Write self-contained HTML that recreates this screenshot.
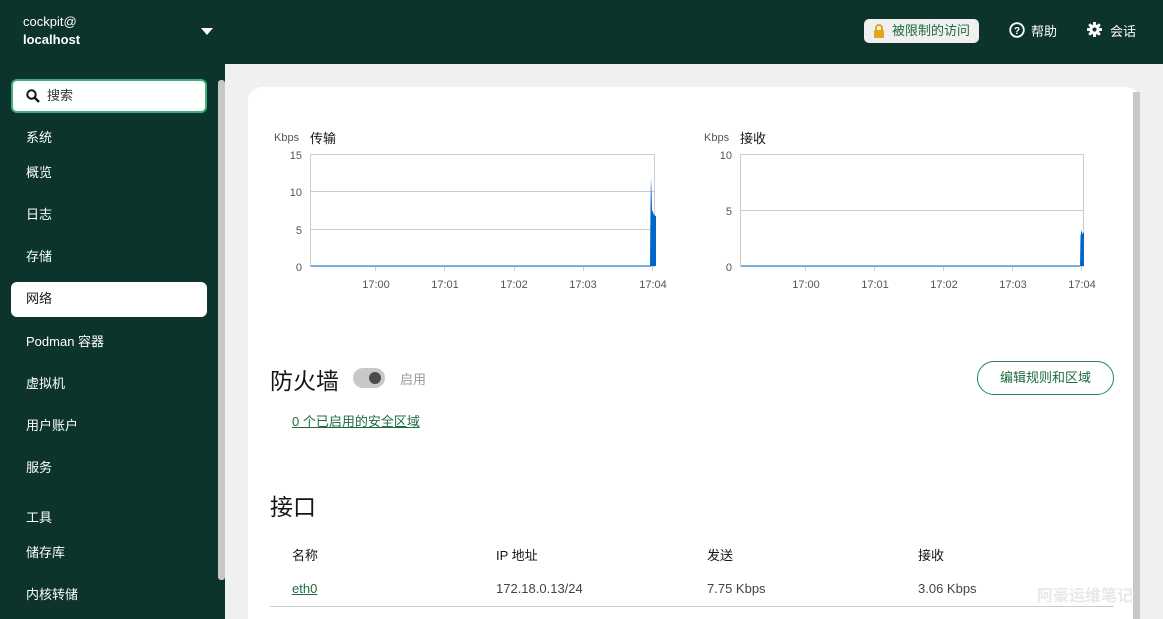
<!DOCTYPE html>
<html><head><meta charset="utf-8"><style>
*{margin:0;padding:0;box-sizing:border-box}
html{width:1163px;height:619px;overflow:hidden}
body{width:1163px;height:619px;overflow:hidden;background:#f0f0f0;font-family:"Liberation Sans","Noto Sans CJK SC",sans-serif;position:relative;font-size:14px;color:#151515}
.top{position:absolute;left:0;top:0;width:1163px;height:64px;background:#0c332c}
.side{position:absolute;left:0;top:64px;width:225px;height:555px;background:#0c332c}
.host{position:absolute;left:23px;top:13px;color:#fff;font-size:13px;line-height:18px}
.caret{position:absolute;left:201px;top:28px;width:0;height:0;border-left:6px solid transparent;border-right:6px solid transparent;border-top:7px solid #fff}
.badge{position:absolute;left:864px;top:19px;width:115px;height:24px;background:#f0f0f0;border-radius:5px;color:#1e6b3e;font-size:13px;line-height:24px;padding-left:28px}
.tl{position:absolute;color:#fff;font-size:13px;top:21px}
.search{position:absolute;left:11px;top:79px;width:196px;height:34px;background:#fff;border:2px solid #3fb17b;border-radius:6px;font-size:13px;line-height:30px;padding-left:34px;color:#333}
.nav{position:absolute;left:26px;color:#fff;font-size:13px}
.sel{position:absolute;left:11px;top:282px;width:196px;height:35px;background:#fff;border-radius:6px}
.sb{position:absolute;left:218px;top:80px;width:7px;height:500px;background:#c8c8c8;border-radius:3px}
.card{position:absolute;left:248px;top:87px;width:892px;height:532px;background:#fff;border-radius:14px 14px 0 0}
.sb2{position:absolute;left:1133px;top:92px;width:7px;height:527px;background:#c8c8c8}
.t{position:absolute;white-space:nowrap}
</style></head><body>
<div class="top"></div><div class="side"></div>
<div class="host">cockpit@<br><b>localhost</b></div>
<div class="caret"></div>
<div class="badge"><svg style="position:absolute;left:9px;top:5px" width="12" height="14" viewBox="0 0 12 14"><path d="M3 6V4a3 3 0 0 1 6 0v2" stroke="#e2a716" stroke-width="2" fill="none"/><rect x="1" y="6" width="10" height="8" rx="1" fill="#e2a716"/></svg>被限制的访问</div>
<svg style="position:absolute;left:1009px;top:22px" width="16" height="16" viewBox="0 0 16 16"><circle cx="8" cy="8" r="6.8" stroke="#fff" stroke-width="1.8" fill="none"/><text x="8" y="12" font-size="10" font-weight="bold" fill="#fff" text-anchor="middle" font-family="Liberation Sans">?</text></svg>
<div class="tl" style="left:1031px">帮助</div>
<svg style="position:absolute;left:1087px;top:22px" width="15" height="15" viewBox="0 0 16 16"><g fill="#fff"><circle cx="8" cy="8" r="5.5"/><rect x="6.5" y="0" width="3" height="16"/><rect x="0" y="6.5" width="16" height="3"/><rect x="6.5" y="0" width="3" height="16" transform="rotate(45 8 8)"/><rect x="6.5" y="0" width="3" height="16" transform="rotate(-45 8 8)"/></g><circle cx="8" cy="8" r="2.2" fill="#0c332c"/></svg>
<div class="tl" style="left:1110px">会话</div>
<div class="search"><svg style="position:absolute;left:13px;top:8px" width="14" height="14" viewBox="0 0 14 14"><circle cx="5.5" cy="5.5" r="4.2" stroke="#151515" stroke-width="2" fill="none"/><path d="M8.5 8.5L13 13" stroke="#151515" stroke-width="2.4"/></svg>搜索</div>
<div class="sel"></div>
<div class="nav" style="top:127px">系统</div>
<div class="nav" style="top:162px">概览</div>
<div class="nav" style="top:204px">日志</div>
<div class="nav" style="top:246px">存储</div>
<div class="nav" style="top:288px;color:#151515">网络</div>
<div class="nav" style="top:331px">Podman 容器</div>
<div class="nav" style="top:373px">虚拟机</div>
<div class="nav" style="top:415px">用户账户</div>
<div class="nav" style="top:457px">服务</div>
<div class="nav" style="top:507px">工具</div>
<div class="nav" style="top:542px">储存库</div>
<div class="nav" style="top:584px">内核转储</div>
<div class="sb"></div>
<div class="card"></div>
<div class="sb2"></div>
<svg style="position:absolute;left:0;top:0" width="1163" height="619">
<g font-family="Liberation Sans" font-size="11" fill="#555">
<text x="274" y="141">Kbps</text><text x="704" y="141">Kbps</text>
<g stroke="#ccc" fill="none"><rect x="310.5" y="154.5" width="344" height="112"/><line x1="310" y1="191.5" x2="655" y2="191.5"/><line x1="310" y1="229.5" x2="655" y2="229.5"/>
<rect x="740.5" y="154.5" width="343" height="112"/><line x1="740" y1="210.5" x2="1083" y2="210.5"/>
<path d="M375.5 266v5M444.5 266v5M514.5 266v5M583.5 266v5M652.5 266v5M805.5 266v5M874.5 266v5M943.5 266v5M1012.5 266v5M1081.5 266v5"/></g>
<g text-anchor="end"><text x="302" y="159">15</text><text x="302" y="196">10</text><text x="302" y="234">5</text><text x="302" y="271">0</text>
<text x="732" y="159">10</text><text x="732" y="215">5</text><text x="732" y="271">0</text></g>
<g text-anchor="middle"><text x="376" y="288">17:00</text><text x="445" y="288">17:01</text><text x="514" y="288">17:02</text><text x="583" y="288">17:03</text><text x="653" y="288">17:04</text>
<text x="806" y="288">17:00</text><text x="875" y="288">17:01</text><text x="944" y="288">17:02</text><text x="1013" y="288">17:03</text><text x="1082" y="288">17:04</text></g>
</g>
<path d="M311 266h340" stroke="#5b9bd5" stroke-width="1.5"/>
<path d="M650 266L650.5 205 651 178 651.5 190 652 210 653 212 654 215 656 216V266Z" fill="#0066cc"/>
<path d="M741 266h339" stroke="#5b9bd5" stroke-width="1.5"/>
<path d="M1080 266L1080.5 236 1081.5 230 1082.5 234 1084 232V266Z" fill="#0066cc"/>
</svg>
<div class="t" style="left:310px;top:128px;font-size:13px">传输</div>
<div class="t" style="left:740px;top:128px;font-size:13px">接收</div>
<div class="t" style="left:270px;top:362px;font-size:23px">防火墙</div>
<div style="position:absolute;left:353px;top:368px;width:32px;height:20px;border-radius:10px;background:#c8c8c8"><div style="position:absolute;left:16px;top:4px;width:12px;height:12px;border-radius:6px;background:#4b4b4b"></div></div>
<div class="t" style="left:400px;top:369px;font-size:13px;color:#999">启用</div>
<div class="t" style="left:292px;top:411px;font-size:13px;color:#1e6b3e;text-decoration:underline">0 个已启用的安全区域</div>
<div style="position:absolute;left:977px;top:361px;width:137px;height:34px;border:1px solid #1e8a4e;border-radius:17px;color:#1e6b3e;font-size:13px;line-height:32px;text-align:center">编辑规则和区域</div>
<div class="t" style="left:270px;top:488px;font-size:23px">接口</div>
<div class="t" style="left:292px;top:545px;font-size:13px">名称</div>
<div class="t" style="left:496px;top:545px;font-size:13px">IP 地址</div>
<div class="t" style="left:707px;top:545px;font-size:13px">发送</div>
<div class="t" style="left:918px;top:545px;font-size:13px">接收</div>
<div class="t" style="left:292px;top:581px;font-size:13px;color:#1e6b3e;text-decoration:underline">eth0</div>
<div class="t" style="left:496px;top:581px;font-size:13px;color:#444">172.18.0.13/24</div>
<div class="t" style="left:707px;top:581px;font-size:13px;color:#444">7.75 Kbps</div>
<div class="t" style="left:918px;top:581px;font-size:13px;color:#444">3.06 Kbps</div>
<div style="position:absolute;left:270px;top:606px;width:844px;height:1px;background:#ccc"></div>
<div class="t" style="left:1037px;top:582px;font-size:16px;color:#e8e8e8;font-weight:bold">阿豪运维笔记</div>
</body></html>
